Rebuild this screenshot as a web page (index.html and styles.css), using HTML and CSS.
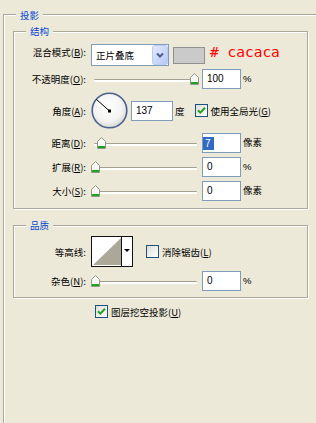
FILE: index.html
```html
<!DOCTYPE html>
<html lang="zh">
<head>
<meta charset="utf-8">
<title>投影</title>
<link rel="stylesheet" href="styles.css">
</head>
<body>
<div class="outer">
  <span class="legend">投影</span>
  <div class="group g1">
    <span class="legend">结构</span>

    <div class="row r-blend">
      <span class="label lift">混合模式(<u>B</u>):</span>
      <div class="select">
        <span class="sel-text">正片叠底</span>
        <svg class="sel-btn" width="16" height="20" viewBox="0 0 16 20">
          <defs><linearGradient id="btnbg" x1="0" y1="0" x2="1" y2="1"><stop offset="0" stop-color="#e3ebfe"/><stop offset="1" stop-color="#b4c8f7"/></linearGradient></defs>
          <rect x="0.5" y="0.5" width="15" height="19" rx="2" fill="url(#btnbg)" stroke="#bccbf3"/>
          <path d="M5 8.5 L8 11.5 L11 8.5" fill="none" stroke="#4d6185" stroke-width="2"/>
        </svg>
      </div>
      <span class="swatch"></span>
      <span class="note"># cacaca</span>
    </div>

    <div class="row r-op">
      <span class="label">不透明度(<u>O</u>):</span>
      <div class="slider">
        <span class="track"></span>
        <svg class="thumb" style="left:99px" width="9" height="12" viewBox="0 0 9 12"><path d="M0.5 4.5 L4.5 0.5 L8.5 4.5 V11.5 H0.5 Z" fill="#f6f6f2" stroke="#8e9a86"/><rect x="1" y="9" width="7" height="2" fill="#21a121"/></svg>
      </div>
      <span class="input">100</span>
      <span class="unit">%</span>
    </div>

    <div class="row r-angle">
      <span class="label">角度(<u>A</u>):</span>
      <svg class="dial" width="37" height="37" viewBox="0 0 37 37">
        <defs><radialGradient id="dialbg" cx="0.45" cy="0.4" r="0.6"><stop offset="0" stop-color="#ffffff"/><stop offset="0.7" stop-color="#f3f3f1"/><stop offset="1" stop-color="#d6d6d2"/></radialGradient></defs>
        <circle cx="18.5" cy="18.5" r="17.3" fill="url(#dialbg)" stroke="#4a6190" stroke-width="1.6"/>
        <line x1="18.5" y1="19" x2="5.5" y2="7.5" stroke="#000" stroke-width="1"/>
        <rect x="17" y="17.5" width="3" height="3" fill="#000"/>
      </svg>
      <span class="input wide">137</span>
      <span class="unit u-deg">度</span>
      <svg class="cb cb-global" width="13" height="13" viewBox="0 0 13 13">
        <defs><linearGradient id="cb1" x1="0" y1="0" x2="1" y2="1"><stop offset="0" stop-color="#dcdcd6"/><stop offset="1" stop-color="#ffffff"/></linearGradient></defs>
        <rect x="0.5" y="0.5" width="12" height="12" fill="url(#cb1)" stroke="#1c5180"/>
        <path d="M3 6.2 L5.3 8.6 L10 3.8" fill="none" stroke="#21a121" stroke-width="2"/>
      </svg>
      <span class="cb-text">使用全局光(<u>G</u>)</span>
    </div>

    <div class="row r-dist">
      <span class="label">距离(<u>D</u>):</span>
      <div class="slider">
        <span class="track"></span>
        <svg class="thumb" style="left:6px" width="9" height="12" viewBox="0 0 9 12"><path d="M0.5 4.5 L4.5 0.5 L8.5 4.5 V11.5 H0.5 Z" fill="#f6f6f2" stroke="#8e9a86"/><rect x="1" y="9" width="7" height="2" fill="#21a121"/></svg>
      </div>
      <span class="input sel"><span class="hl">7</span></span>
      <span class="unit">像素</span>
    </div>

    <div class="row r-spread">
      <span class="label">扩展(<u>R</u>):</span>
      <div class="slider">
        <span class="track"></span>
        <svg class="thumb" style="left:0px" width="9" height="12" viewBox="0 0 9 12"><path d="M0.5 4.5 L4.5 0.5 L8.5 4.5 V11.5 H0.5 Z" fill="#f6f6f2" stroke="#8e9a86"/><rect x="1" y="9" width="7" height="2" fill="#21a121"/></svg>
      </div>
      <span class="input">0</span>
      <span class="unit">%</span>
    </div>

    <div class="row r-size">
      <span class="label">大小(<u>S</u>):</span>
      <div class="slider">
        <span class="track"></span>
        <svg class="thumb" style="left:0px" width="9" height="12" viewBox="0 0 9 12"><path d="M0.5 4.5 L4.5 0.5 L8.5 4.5 V11.5 H0.5 Z" fill="#f6f6f2" stroke="#8e9a86"/><rect x="1" y="9" width="7" height="2" fill="#21a121"/></svg>
      </div>
      <span class="input">0</span>
      <span class="unit">像素</span>
    </div>
  </div>

  <div class="group g2">
    <span class="legend">品质</span>

    <div class="row r-contour">
      <span class="label">等高线:</span>
      <svg class="contour" width="42" height="31" viewBox="0 0 42 31">
        <rect x="0.5" y="0.5" width="41" height="30" fill="#fff" stroke="#111"/>
        <path d="M2 29 L30 2 L30 29 Z" fill="#aca899"/>
        <line x1="30.5" y1="1" x2="30.5" y2="30" stroke="#111"/>
        <path d="M33 13 H39 L36 16 Z" fill="#000"/>
      </svg>
      <svg class="cb cb-anti" width="13" height="13" viewBox="0 0 13 13">
        <defs><linearGradient id="cb2" x1="0" y1="0" x2="1" y2="1"><stop offset="0" stop-color="#dcdcd6"/><stop offset="1" stop-color="#ffffff"/></linearGradient></defs>
        <rect x="0.5" y="0.5" width="12" height="12" fill="url(#cb2)" stroke="#1c5180"/>
      </svg>
      <span class="cb-text">消除锯齿(<u>L</u>)</span>
    </div>

    <div class="row r-noise">
      <span class="label">杂色(<u>N</u>):</span>
      <div class="slider">
        <span class="track"></span>
        <svg class="thumb" style="left:0px" width="9" height="12" viewBox="0 0 9 12"><path d="M0.5 4.5 L4.5 0.5 L8.5 4.5 V11.5 H0.5 Z" fill="#f6f6f2" stroke="#8e9a86"/><rect x="1" y="9" width="7" height="2" fill="#21a121"/></svg>
      </div>
      <span class="input">0</span>
      <span class="unit">%</span>
    </div>
  </div>

  <div class="opt">
    <svg class="cb" width="13" height="13" viewBox="0 0 13 13">
      <defs><linearGradient id="cb3" x1="0" y1="0" x2="1" y2="1"><stop offset="0" stop-color="#dcdcd6"/><stop offset="1" stop-color="#ffffff"/></linearGradient></defs>
      <rect x="0.5" y="0.5" width="12" height="12" fill="url(#cb3)" stroke="#1c5180"/>
      <path d="M3 6.2 L5.3 8.6 L10 3.8" fill="none" stroke="#21a121" stroke-width="2"/>
    </svg>
    <span class="cb-text">图层挖空投影(<u>U</u>)</span>
  </div>
</div>
</body>
</html>
```

FILE: styles.css
```css
* { box-sizing: border-box; }
html, body { margin: 0; height: 100%; }
body {
  background: #ece9d8;
  font-family: "Noto Sans CJK SC", "Noto Sans", sans-serif;
  font-size: 9.5px;
  line-height: 12px;
  color: #000;
  overflow: hidden;
}
u { text-underline-offset: 1px; }

.outer {
  position: relative;
  margin: 14px 0 0 3px;
  height: 409px;
  border-top: 1px solid #aca899;
  border-left: 1px solid #aca899;
  box-shadow: inset 1px 1px 0 #fff;
  padding: 16px 0 0 9px;
}
.legend {
  position: absolute;
  left: 12px;
  top: -7px;
  padding: 0 4px;
  background: #ece9d8;
  color: #0046d5;
  line-height: 12px;
  white-space: nowrap;
}
.outer > .legend { top: -6px; }

.group {
  position: relative;
  width: 295px;
  border: 1px solid #aca899;
  box-shadow: inset 1px 1px 0 #fff, 1px 1px 0 #fff;
}
.g1 { height: 178px; padding-top: 12px; }
.g2 { height: 73px; margin-top: 16px; padding-top: 10px; }

.row { display: flex; align-items: center; height: 20px; }
.label {
  width: 72px;
  margin-right: 5px;
  text-align: right;
  white-space: nowrap;
}
.lift { margin-bottom: 6px; }

.r-blend { height: 22px; }
.r-op { margin-top: 3px; }
.r-angle { margin-top: 3px; height: 37px; }
.r-dist { margin-top: 4px; }
.r-spread, .r-size { margin-top: 4px; }
.r-contour { height: 31px; }
.r-noise { margin-top: 4px; }

.select {
  display: flex;
  align-items: center;
  width: 78px;
  height: 22px;
  border: 1px solid #7f9db9;
  background: #fff;
  padding-left: 4px;
}
.sel-text { flex: 1; white-space: nowrap; }
.sel-btn { display: block; flex: none; }

.swatch {
  width: 32px;
  height: 17px;
  margin-left: 4px;
  background: #cacaca;
  border: 1px solid #8f8f8f;
}
.note {
  margin-left: 5px;
  margin-bottom: 6px;
  font-family: "DejaVu Sans Mono", monospace;
  font-size: 14.5px;
  line-height: 16px;
  color: #ff0000;
  white-space: pre;
}

.slider {
  position: relative;
  width: 109px;
  height: 20px;
  margin-right: 2px;
  flex: none;
}
.track {
  display: block;
  height: 3px;
  margin: 10px 3px 0 3px;
  border-top: 1px solid #a4a194;
  background: #fff;
  border-radius: 1px;
}
.thumb { position: absolute; top: 4px; display: block; }

.input {
  width: 39px;
  height: 20px;
  flex: none;
  border: 1px solid #7f9db9;
  background: #fff;
  padding-left: 4px;
  font-family: "Liberation Sans", Arial, sans-serif;
  font-size: 10px;
  line-height: 18px;
}
.input.wide { width: 42px; }
.input.sel { padding-left: 0; display: flex; align-items: center; }
.hl {
  display: inline-block;
  background: #316ac5;
  color: #fff;
  padding: 0 3px 0 2px;
  line-height: 13px;
}
.unit { margin-left: 2px; white-space: nowrap; }
.unit:not(.u-deg) { font-family: "Liberation Sans", "Noto Sans CJK SC", sans-serif; }

.dial { display: block; flex: none; margin-right: 3px; }
.u-deg { margin-left: 2px; font-family: "Noto Sans CJK SC", sans-serif; }
.cb { display: block; flex: none; }
.cb-global { margin-left: 10px; }
.cb-text { margin-left: 3px; white-space: nowrap; }

.contour { display: block; flex: none; }
.cb-anti { margin-left: 13px; }

.opt {
  display: flex;
  align-items: center;
  height: 13px;
  margin: 7px 0 0 82px;
}
```
